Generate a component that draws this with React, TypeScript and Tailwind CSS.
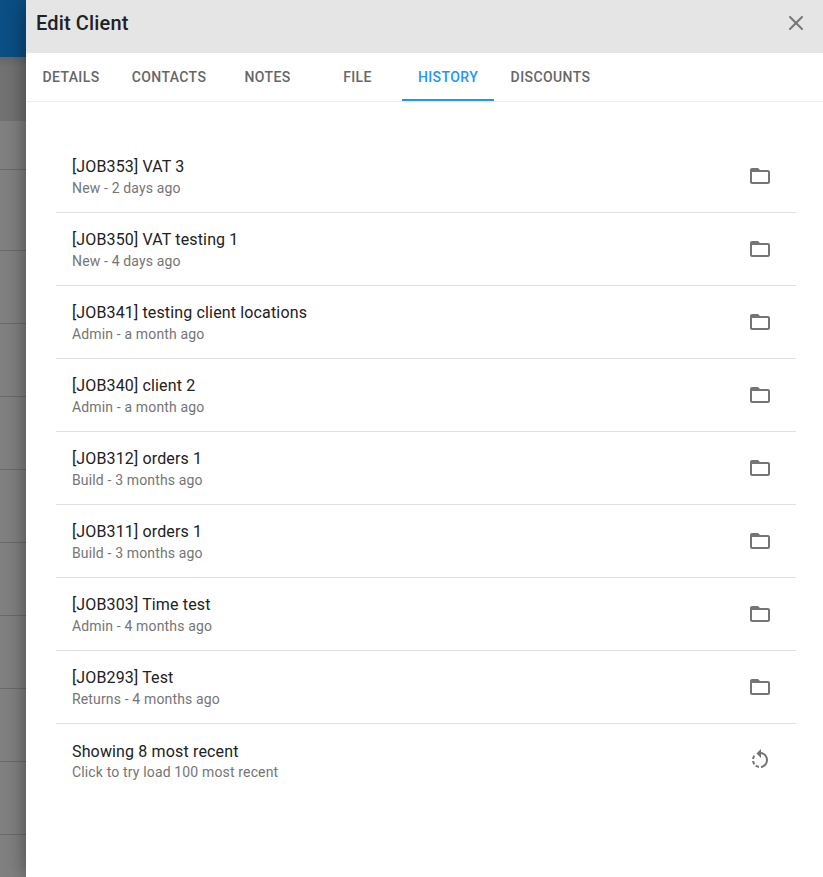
import React from 'react';
import { X } from 'lucide-react';

const jobs = [
  { title: '[JOB353] VAT 3', sub: 'New - 2 days ago' },
  { title: '[JOB350] VAT testing 1', sub: 'New - 4 days ago' },
  { title: '[JOB341] testing client locations', sub: 'Admin - a month ago' },
  { title: '[JOB340] client 2', sub: 'Admin - a month ago' },
  { title: '[JOB312] orders 1', sub: 'Build - 3 months ago' },
  { title: '[JOB311] orders 1', sub: 'Build - 3 months ago' },
  { title: '[JOB303] Time test', sub: 'Admin - 4 months ago' },
  { title: '[JOB293] Test', sub: 'Returns - 4 months ago' },
];

const tabs = [
  { label: 'DETAILS', width: 'w-[90px]' },
  { label: 'CONTACTS', width: 'w-[106px]' },
  { label: 'NOTES', width: 'w-[90px] pl-px' },
  { label: 'FILE', width: 'w-[90px] pl-px' },
  { label: 'HISTORY', width: 'w-[92px]', active: true },
  { label: 'DISCOUNTS', width: 'w-[112px] pl-px' },
];

// material "folder_open" outline
const FolderIcon = () => (
  <svg viewBox="0 0 24 24" className="h-6 w-6 fill-[#757575]">
    <path d="M20 6h-8l-2-2H4c-1.1 0-1.99.9-1.99 2L2 18c0 1.1.9 2 2 2h16c1.1 0 2-.9 2-2V8c0-1.1-.9-2-2-2zm0 12H4V8h16v10z" />
  </svg>
);

// material "rotate_left"
const ReloadIcon = () => (
  <svg viewBox="0 0 24 24" className="mb-0.5 h-6 w-6 fill-[#757575]">
    <path d="M7.11 8.53L5.7 7.11C4.8 8.27 4.24 9.61 4.07 11h2.02c.14-.87.49-1.72 1.02-2.47zM6.09 13H4.07c.17 1.39.72 2.73 1.62 3.89l1.41-1.42c-.52-.75-.87-1.59-1.01-2.47zm1.01 5.32c1.16.9 2.51 1.44 3.9 1.61V17.9c-.87-.15-1.71-.49-2.46-1.03L7.1 18.32zM13 4.07V1L8.45 5.55 13 10V6.09c2.84.48 5 2.94 5 5.91s-2.16 5.43-5 5.91v2.02c3.95-.49 7-3.85 7-7.93s-3.05-7.44-7-7.93z" />
  </svg>
);

const Row = ({ title, sub, icon, last }: { title: string; sub: string; icon: React.ReactNode; last?: boolean }) => (
  <div className={`flex h-[73px] items-center justify-between pl-4 pr-6 ${last ? '' : 'border-b border-[#e0e0e0]'}`}>
    <div>
      <div className={`text-base leading-6 tracking-[0.15px] text-[#212121] ${last ? '' : 'mt-px -mb-px'}`}>{title}</div>
      <div className={`text-sm leading-5 tracking-[0.15px] text-[#757575] ${last ? '-mt-0.5' : ''}`}>{sub}</div>
    </div>
    {icon}
  </div>
);

export default function App() {
  return (
    <div className="flex h-[877px] w-[823px] overflow-hidden bg-[#808080] font-['Roboto',sans-serif]">
      <div className="flex w-[26px] shrink-0 flex-col overflow-hidden">
        <div className="h-[57px] shrink-0 bg-[#0b4f85]" />
        <div className="h-16 shrink-0 bg-linear-to-b from-[#666666] to-[#727272] to-[15%]" />
        <div className="h-[49px] shrink-0 border-b border-[#6a6a6a] bg-[#808080]" />
        <div className="h-[81px] shrink-0 border-b border-[#6a6a6a] bg-[#808080]" />
        {[0, 1, 2, 3, 4, 5, 6, 7, 8].map((i) => (
          <div key={i} className="h-[73px] shrink-0 border-b border-[#6a6a6a] bg-[#808080]" />
        ))}
      </div>
      <div className="flex min-w-0 flex-1 flex-col bg-white shadow-[0_0_20px_rgba(0,0,0,0.45)]">
        <div className="flex h-[53px] shrink-0 items-center justify-between bg-[#e5e5e5] pb-2 pl-2.5 pr-[15px]">
          <h2 className="text-xl font-medium tracking-[0.15px] text-[#212121]">Edit Client</h2>
          <X className="h-6 w-6 text-[#757575]" strokeWidth={2} />
        </div>
        <div className="flex h-[49px] shrink-0 border-b border-[#eeeeee]">
          {tabs.map((tab) => (
            <div
              key={tab.label}
              className={`relative flex items-center justify-center text-sm font-medium tracking-[0.4px] ${tab.width} ${
                tab.active ? 'text-[#2196f3]' : 'text-[#666666]'
              }`}
            >
              {tab.label}
              {tab.active && <span className="absolute inset-x-0 bottom-0 h-0.5 bg-[#2196f3]" />}
            </div>
          ))}
        </div>
        <div className="pl-[30px] pr-[27px] pt-[38px]">
          {jobs.map((job) => (
            <Row key={job.title} title={job.title} sub={job.sub} icon={<FolderIcon />} />
          ))}
          <Row title="Showing 8 most recent" sub="Click to try load 100 most recent" icon={<ReloadIcon />} last />
        </div>
      </div>
    </div>
  );
}
